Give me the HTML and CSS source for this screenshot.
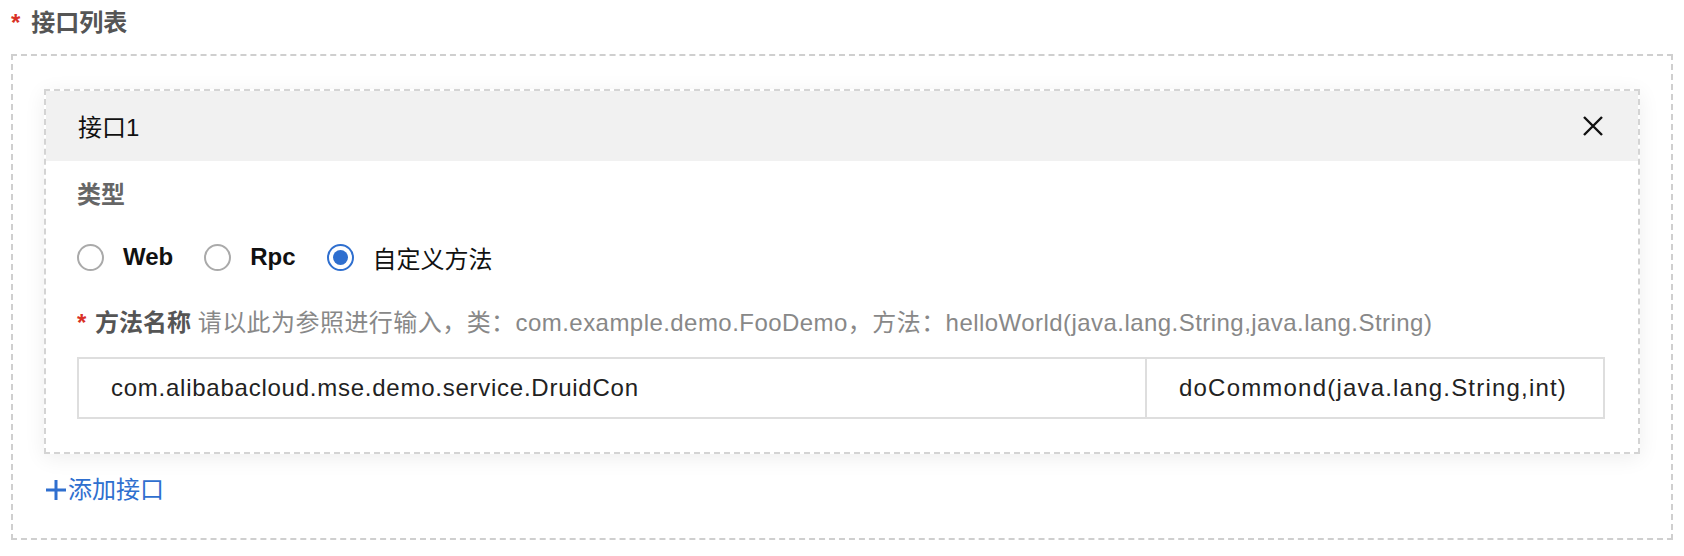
FILE: index.html
```html
<!DOCTYPE html>
<html lang="zh-CN">
<head>
    <meta charset="UTF-8">
    <meta name="viewport" content="width=device-width, initial-scale=1.0">
    <title>接口列表</title>
    <link rel="stylesheet" href="styles.css">
</head>
<body>
    <div class="field-title"><span class="required">*</span>接口列表</div>
    <div class="list-box">
        <div class="api-card">
            <div class="api-card-header">
                <span>接口1</span>
                <svg class="close-icon" viewBox="0 0 20 20" width="20" height="20">
                    <path d="M1 1 L19 19 M19 1 L1 19" stroke="#111" stroke-width="2.4" fill="none"/>
                </svg>
            </div>
            <div class="api-card-body">
                <div class="label">类型</div>
                <div class="radio-group">
                    <label class="radio"><span class="radio-dot"></span>Web</label>
                    <label class="radio"><span class="radio-dot"></span>Rpc</label>
                    <label class="radio checked"><span class="radio-dot"></span>自定义方法</label>
                </div>
                <div class="method-label">
                    <span class="required">*</span>
                    <b>方法名称</b>
                    <span class="hint">请以此为参照进行输入，类：com.example.demo.FooDemo，方法：helloWorld(java.lang.String,java.lang.String)</span>
                </div>
                <div class="method-inputs">
                    <div class="input class-input">com.alibabacloud.mse.demo.service.DruidCon</div>
                    <div class="input method-input">doCommond(java.lang.String,int)</div>
                </div>
            </div>
        </div>
        <div class="add-link">
            <svg class="plus" viewBox="0 0 20 20" width="20" height="20">
                <path d="M10 0 V20 M0 10 H20" stroke="#2f6fcf" stroke-width="3" fill="none"/>
            </svg>
            添加接口
        </div>
    </div>
</body>
</html>
```

FILE: styles.css
```css
body {
    font-family: "Liberation Sans", "Noto Sans CJK SC", sans-serif;
    background-color: #fff;
    color: #333;
    margin: 0;
    padding: 7px 0 0 11px;
    font-size: 24px;
}
.required {
    color: #d93026;
    font-weight: bold;
}
.field-title {
    font-weight: bold;
    color: #555;
    line-height: 32px;
    height: 32px;
    margin-bottom: 15px;
}
.field-title .required {
    margin-left: 0;
    margin-right: 11px;
}
.list-box {
    width: 1662px;
    height: 486px;
    box-sizing: border-box;
    border: 2px dashed #cfcfcf;
    padding: 33px 31px 0 31px;
}
.api-card {
    border: 2px dashed #d4d4d4;
    box-shadow: 0 4px 20px rgba(0, 0, 0, 0.07);
}
.api-card-header {
    background-color: #f1f1f1;
    height: 70px;
    display: flex;
    align-items: center;
    justify-content: space-between;
    padding: 0 35px 2px 32px;
    box-sizing: border-box;
    color: #111;
}
.close-icon {
    margin-top: 2px;
}
.api-card-body {
    padding: 18px 0 33px 31px;
}
.label {
    color: #666;
    font-weight: bold;
    line-height: 32px;
}
.radio-group {
    display: flex;
    margin-top: 32px;
    height: 28px;
}
.radio {
    display: flex;
    align-items: center;
    font-weight: bold;
    color: #111;
    margin-right: 31px;
}
.radio-dot {
    box-sizing: border-box;
    width: 27px;
    height: 27px;
    border: 2px solid #aaa;
    border-radius: 50%;
    margin-right: 19px;
    position: relative;
}
.checked {
    font-weight: normal;
}
.checked .radio-dot {
    border-color: #2f6fcf;
}
.checked .radio-dot::after {
    content: "";
    position: absolute;
    left: 4px;
    top: 4px;
    width: 15px;
    height: 15px;
    border-radius: 50%;
    background-color: #2f6fcf;
}
.method-label {
    margin-top: 36px;
    line-height: 32px;
}
.method-label .required {
    margin-right: 2px;
}
.method-label b {
    color: #555;
}
.hint {
    color: #888;
    letter-spacing: 0.45px;
}
.method-inputs {
    display: flex;
    margin-top: 18px;
}
.input {
    box-sizing: border-box;
    border: 2px solid #dedede;
    height: 62px;
    display: flex;
    align-items: center;
    color: #222;
    letter-spacing: 0.75px;
    padding-left: 32px;
}
.class-input {
    width: 1070px;
}
.method-input {
    border-left: none;
    width: 458px;
    letter-spacing: 1.2px;
}
.add-link {
    color: #2f6fcf;
    margin-top: 20px;
    margin-left: 2px;
    display: flex;
    align-items: center;
    line-height: 32px;
}
.plus {
    margin-right: 2px;
}
```
